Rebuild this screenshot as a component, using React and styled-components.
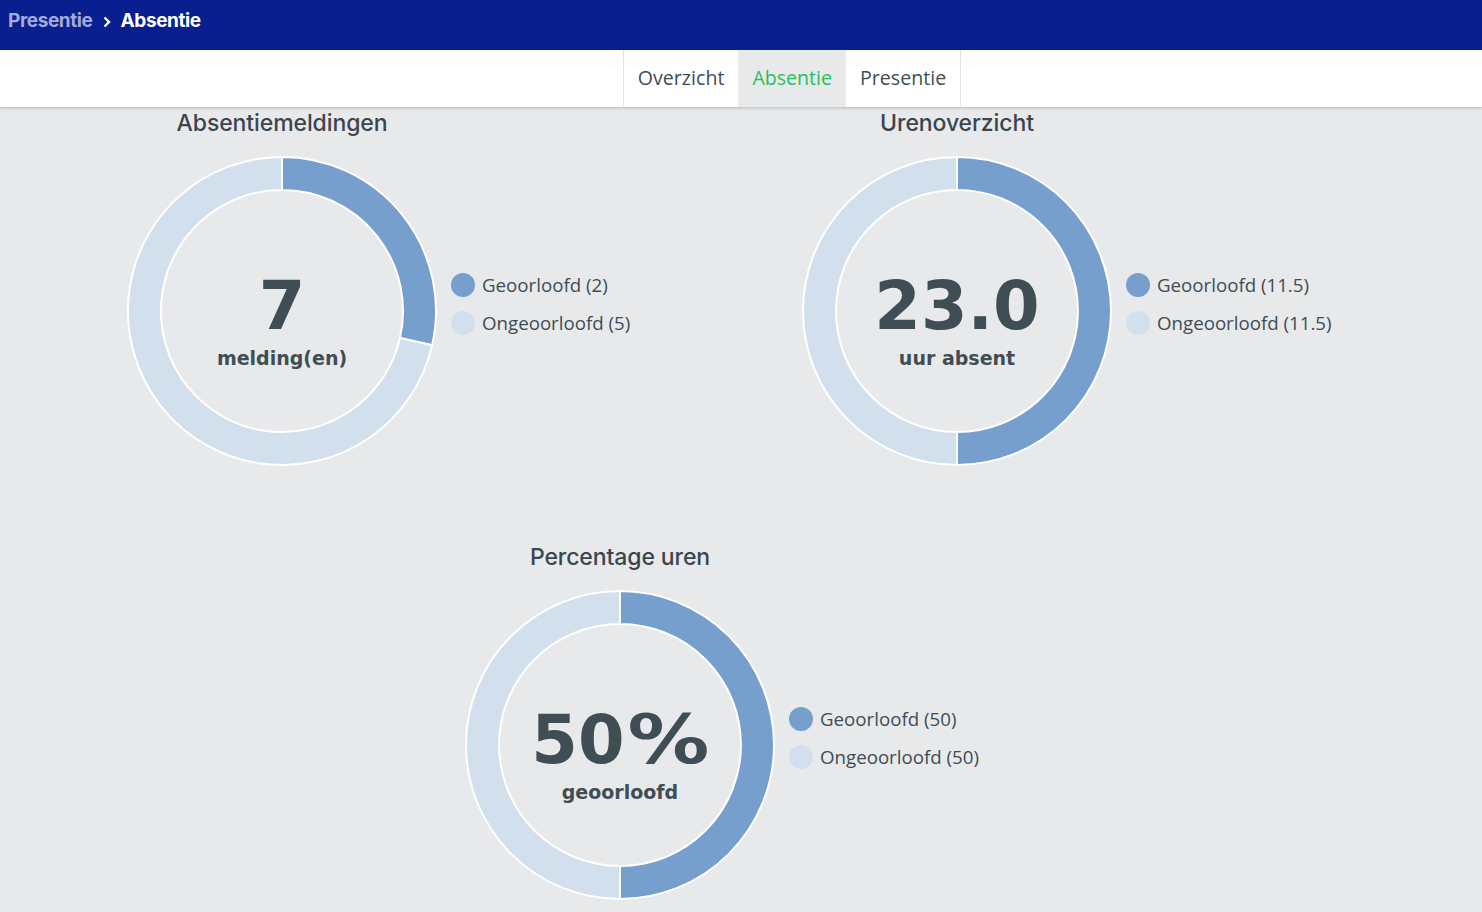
import React from 'react';
import styled, { createGlobalStyle } from 'styled-components';

const GlobalStyle = createGlobalStyle`
  html, body {
    margin: 0;
    padding: 0;
    background: #e8e9eb;
    font-family: "Open Sans", "Liberation Sans", sans-serif;
  }
`;

const Page = styled.div`
  width: 1482px;
  height: 912px;
  overflow: hidden;
  background: #e8e9eb;
`;

const TopBar = styled.header`
  height: 50px;
  background: #0a1f8f;
  display: flex;
  align-items: flex-start;
  padding: 9px 0 0 8px;
  box-sizing: border-box;
  gap: 10px;
  font-family: Inter, "Liberation Sans", sans-serif;
  font-weight: 700;
  font-size: 19px;
  letter-spacing: -0.4px;
`;

const Crumb = styled.span`
  color: ${(p) => (p.$current ? '#ffffff' : '#a3aadd')};
`;

const Chevron = styled.svg`
  margin-top: 7px;
`;

const TabBar = styled.nav`
  height: 57px;
  background: #ffffff;
  display: flex;
  justify-content: center;
  border-bottom: 1px solid #c9cbce;
  box-shadow: 0 1px 2px rgba(0, 0, 0, 0.12);
  position: relative;
`;

const TabList = styled.div`
  display: flex;
  margin-left: 102px;
  border-left: 1px solid #e3e4e6;
  border-right: 1px solid #e3e4e6;
`;

const Tab = styled.div`
  display: flex;
  align-items: center;
  padding: 0 14px 2px;
  font-size: 19.6px;
  color: ${(p) => (p.$active ? '#1fc25d' : '#3f4e56')};
  background: ${(p) => (p.$active ? '#e8e9eb' : '#ffffff')};
`;

const Row = styled.section`
  display: flex;
  padding-left: ${(p) => p.$left}px;
  margin-top: ${(p) => p.$top}px;
`;

const Card = styled.div`
  width: ${(p) => p.$width}px;
  display: grid;
  grid-template-columns: 310px auto;
  column-gap: 14px;
  align-items: center;
`;

const Title = styled.h2`
  grid-column: 1;
  margin: 0 0 18px;
  height: 30px;
  line-height: 31px;
  text-align: center;
  white-space: nowrap;
  font-family: Inter, "Liberation Sans", sans-serif;
  font-weight: 500;
  font-size: 23px;
  color: #3a464d;
  letter-spacing: -0.1px;
`;

const DonutBox = styled.div`
  grid-column: 1;
  position: relative;
  width: 310px;
  height: 310px;
`;

const Center = styled.div`
  position: absolute;
  inset: 0;
  display: flex;
  flex-direction: column;
  align-items: center;
  justify-content: center;
  padding-top: 18px;
  box-sizing: border-box;
  font-family: "DejaVu Sans", Verdana, sans-serif;
  font-weight: 700;
  color: #3f4e55;
`;

const BigValue = styled.div`
  font-size: 67px;
  line-height: 70px;
  white-space: nowrap;
`;

const Percent = styled.span`
  display: inline-block;
  transform: scaleX(1.22);
  margin: 0 7px 0 10px;
`;

const SubLabel = styled.div`
  font-size: 19px;
  line-height: 24px;
  margin-top: 5px;
`;

const Legend = styled.ul`
  grid-column: 2;
  list-style: none;
  margin: 0 0 14px;
  padding: 0;
  display: flex;
  flex-direction: column;
  gap: 12px;
`;

const LegendItem = styled.li`
  display: flex;
  align-items: center;
  gap: 7px;
  font-size: 18.7px;
  line-height: 26px;
  color: #3e4d55;
  white-space: nowrap;
`;

const Dot = styled.span`
  width: 24px;
  height: 24px;
  border-radius: 50%;
  background: ${(p) => p.$color};
`;

const DARK = '#769fcd';
const LIGHT = '#d2dfec';

function arcPath(cx, cy, r1, r2, a0, a1) {
  const pt = (r, a) => [cx + r * Math.sin(a), cy - r * Math.cos(a)];
  const large = a1 - a0 > Math.PI ? 1 : 0;
  const [x0, y0] = pt(r1, a0);
  const [x1, y1] = pt(r1, a1);
  const [x2, y2] = pt(r2, a1);
  const [x3, y3] = pt(r2, a0);
  return `M${x0} ${y0} A${r1} ${r1} 0 ${large} 1 ${x1} ${y1} L${x2} ${y2} A${r2} ${r2} 0 ${large} 0 ${x3} ${y3} Z`;
}

function Donut({ parts }) {
  const total = parts.reduce((s, p) => s + p.value, 0);
  let start = 0;
  return (
    <svg width="310" height="310" viewBox="0 0 310 310">
      {parts.map((p, i) => {
        const a0 = (start / total) * Math.PI * 2;
        start += p.value;
        const a1 = (start / total) * Math.PI * 2;
        return (
          <path
            key={i}
            d={arcPath(155, 155, 154, 121, a0, a1)}
            fill={p.color}
            stroke="#ffffff"
            strokeWidth="2"
            strokeLinejoin="round"
          />
        );
      })}
    </svg>
  );
}

function ChartCard({ title, value, label, parts, width }) {
  return (
    <Card $width={width}>
      <Title>{title}</Title>
      <div />
      <DonutBox>
        <Donut parts={parts} />
        <Center>
          <BigValue>{value}</BigValue>
          <SubLabel>{label}</SubLabel>
        </Center>
      </DonutBox>
      <Legend>
        {parts.map((p) => (
          <LegendItem key={p.name}>
            <Dot $color={p.color} />
            {p.name} ({p.value})
          </LegendItem>
        ))}
      </Legend>
    </Card>
  );
}

export default function App() {
  return (
    <Page>
      <GlobalStyle />
      <TopBar>
        <Crumb>Presentie</Crumb>
        <Chevron width="8" height="12" viewBox="0 0 8 12">
          <path d="M1.5 1.5 L6 6 L1.5 10.5" fill="none" stroke="#ffffff" strokeWidth="2.4" />
        </Chevron>
        <Crumb $current>Absentie</Crumb>
      </TopBar>
      <TabBar>
        <TabList>
          <Tab>Overzicht</Tab>
          <Tab $active>Absentie</Tab>
          <Tab>Presentie</Tab>
        </TabList>
      </TabBar>
      <Row $left={127} $top={0}>
        <ChartCard
          width={675}
          title="Absentiemeldingen"
          value="7"
          label="melding(en)"
          parts={[
            { name: 'Geoorloofd', value: 2, color: DARK },
            { name: 'Ongeoorloofd', value: 5, color: LIGHT },
          ]}
        />
        <ChartCard
          width={600}
          title="Urenoverzicht"
          value="23.0"
          label="uur absent"
          parts={[
            { name: 'Geoorloofd', value: 11.5, color: DARK },
            { name: 'Ongeoorloofd', value: 11.5, color: LIGHT },
          ]}
        />
      </Row>
      <Row $left={465} $top={76}>
        <ChartCard
          width={600}
          title="Percentage uren"
          value={<>50<Percent>%</Percent></>}
          label="geoorloofd"
          parts={[
            { name: 'Geoorloofd', value: 50, color: DARK },
            { name: 'Ongeoorloofd', value: 50, color: LIGHT },
          ]}
        />
      </Row>
    </Page>
  );
}
